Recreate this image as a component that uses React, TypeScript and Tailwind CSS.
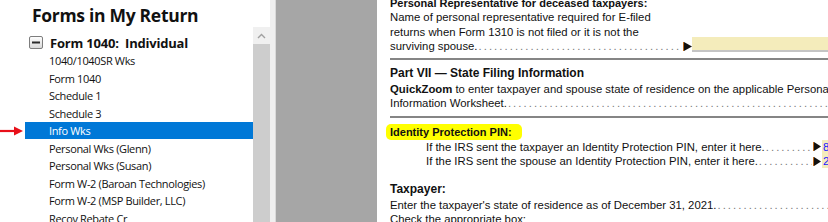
import React from "react";

const ITEMS = [
  "1040/1040SR Wks",
  "Form 1040",
  "Schedule 1",
  "Schedule 3",
  "Info Wks",
  "Personal Wks (Glenn)",
  "Personal Wks (Susan)",
  "Form W-2 (Baroan Technologies)",
  "Form W-2 (MSP Builder, LLC)",
  "Recov Rebate Cr",
];

const DOTS = ". . . . . . . . . . . . . . . . . . . . . . . . . . . . . . . . . . . . . . . . . . . . . . . . . . . . . . . . . . . . . . . . . . . . . . . . . . . . . . . . . . . . . . . . . . . . . . . . . . . . . . . . . . . . .";

function Leader() {
  return (
    <span className="flex-1 min-w-0 overflow-hidden whitespace-nowrap text-[#7a7a7a] tracking-[-0.55px] pl-[1px]">
      {DOTS}
    </span>
  );
}

function Pointer() {
  return (
    <svg width="8" height="9" viewBox="0 0 8 9" className="shrink-0">
      <rect x="0" y="0" width="1" height="9" fill="#c06a1a" />
      <polygon points="1,0 8,4.5 1,9" fill="#111" />
    </svg>
  );
}

function RedArrow() {
  return (
    <svg width="24" height="10" viewBox="0 0 24 10">
      <line x1="0" y1="5" x2="17" y2="5" stroke="#e8101a" strokeWidth="2.2" />
      <polygon points="14,0.5 23,5 14,9.5" fill="#e8101a" />
    </svg>
  );
}

function MinusBox() {
  return (
    <svg width="14" height="13" viewBox="0 0 14 13" className="shrink-0">
      <defs>
        <linearGradient id="mb" x1="0" y1="0" x2="0" y2="1">
          <stop offset="0" stopColor="#ffffff" />
          <stop offset="1" stopColor="#d8d8d8" />
        </linearGradient>
      </defs>
      <rect x="0.5" y="0.5" width="13" height="12" rx="1.5" fill="url(#mb)" stroke="#7d7d7d" />
      <rect x="3" y="5.5" width="8" height="2" fill="#2a2a2a" />
    </svg>
  );
}

function FormsTree() {
  return (
    <div className="w-[253px] shrink-0 bg-white font-['Open_Sans',sans-serif] text-[#111]">
      <div className="h-[33px] pl-[32px] pt-[2px] text-[17.5px] font-bold leading-[26px] tracking-[-0.3px]">
        Forms in My Return
      </div>
      <div className="h-[19px] flex items-center gap-[7px] pl-[29px] text-[13px] font-bold">
        <MinusBox />
        <span className="leading-[18px] tracking-[-0.2px]">Form 1040:&nbsp; Individual</span>
      </div>
      {ITEMS.map((name) => {
        const selected = name === "Info Wks";
        return (
          <div key={name} className="h-[17.5px] flex items-center">
            <div className="w-[25px] h-full flex items-center">{selected && <RedArrow />}</div>
            <div
              className={
                selected
                  ? "flex-1 h-[17px] pl-[24px] bg-[#0078d7] text-white text-[11px] tracking-[-0.35px] leading-[17px]"
                  : "flex-1 pl-[24px] text-[11px] tracking-[-0.35px] leading-[17px]"
              }
            >
              {name}
            </div>
          </div>
        );
      })}
    </div>
  );
}

function ScrollStrip() {
  return (
    <div className="flex shrink-0">
      <div className="w-[17px] flex flex-col">
        <div className="h-[27px] bg-white" />
        <div className="h-[17px] bg-[#f0f0f0] flex items-center justify-center">
          <svg width="9" height="6" viewBox="0 0 9 6">
            <polyline points="1,5 4.5,1.5 8,5" fill="none" stroke="#a0a0a0" strokeWidth="1.4" />
          </svg>
        </div>
        <div className="flex-1 bg-[#cdcdcd]" />
      </div>
      <div className="w-[5px] bg-[#efefef]" />
      <div className="w-[1px] bg-[#d9d9d9]" />
    </div>
  );
}

function DocPage() {
  return (
    <div className="flex-1 min-w-0 overflow-hidden bg-white pl-[13px] font-['Liberation_Sans',Arial,sans-serif] text-[11.33px] text-[#111]">
      <div className="w-[480px] -mt-[4.5px] leading-[14.5px]">
        <div className="font-bold text-[11px] whitespace-nowrap">Personal Representative for deceased taxpayers:</div>
        <div className="whitespace-nowrap">Name of personal representative required for E-filed</div>
        <div className="whitespace-nowrap">returns when Form 1310 is not filed or it is not the</div>
        <div className="flex items-start">
          <div className="w-[291px] flex">
            <span className="whitespace-nowrap">surviving spouse.</span>
            <Leader />
          </div>
          <span className="h-[14.5px] flex items-center ml-[2px]">
            <svg width="9" height="9" viewBox="0 0 9 9">
              <rect x="0" y="0" width="1" height="9" fill="#c06a1a" />
              <polygon points="1,0 9,4.5 1,9" fill="#111" />
            </svg>
          </span>
          <div className="flex-1 -mt-[2px] h-[15px] bg-[#f4ecbb] border-b-[2px] border-[#c4c4c4]" />
        </div>

        <div className="mt-[4.5px] h-[2px] bg-[#858585] w-[460px]" />

        <div className="mt-[4.5px] text-[12px] leading-[17px] font-bold">Part VII &mdash; State Filing Information</div>
        <div className="whitespace-nowrap">
          <span className="font-bold">QuickZoom</span> to enter taxpayer and spouse state of residence on the applicable Personal
        </div>
        <div className="flex">
          <span className="whitespace-nowrap">Information Worksheet.</span>
          <Leader />
        </div>

        <div className="mt-[5.5px] h-[2px] bg-[#858585] w-[460px]" />

        <div className="mt-[7px]">
          <span className="font-bold text-[11px] bg-[#ffff00] rounded-[5px] pl-[4px] pr-[10px] -ml-[4px] py-[2px]">
            Identity Protection PIN:
          </span>
        </div>
        <div className="flex items-center pl-[36px]">
          <div className="w-[386px] flex">
            <span className="whitespace-nowrap">If the IRS sent the taxpayer an Identity Protection PIN, enter it here.</span>
            <Leader />
          </div>
          <span className="ml-[1px]">
            <Pointer />
          </span>
          <span className="ml-[1px] w-[40px] h-[14px] bg-[#f4ecbb] text-[#1a1aff] pl-[1px] leading-[14px]">8</span>
        </div>
        <div className="flex items-center pl-[36px]">
          <div className="w-[386px] flex">
            <span className="whitespace-nowrap">If the IRS sent the spouse an Identity Protection PIN, enter it here.</span>
            <Leader />
          </div>
          <span className="ml-[1px]">
            <Pointer />
          </span>
          <span className="ml-[1px] w-[40px] h-[14px] bg-[#f4ecbb] text-[#1a1aff] pl-[1px] leading-[14px]">2</span>
        </div>

        <div className="mt-[12px] text-[12px] leading-[17px] font-bold">Taxpayer:</div>
        <div className="flex">
          <span className="whitespace-nowrap">Enter the taxpayer&apos;s state of residence as of December 31, 2021.</span>
          <Leader />
        </div>
        <div>Check the appropriate box:</div>
      </div>
    </div>
  );
}

export default function App() {
  return (
    <div className="w-[828px] h-[222px] flex overflow-hidden bg-white">
      <FormsTree />
      <ScrollStrip />
      <div className="w-[101px] shrink-0 bg-[#a6a6a6]" />
      <DocPage />
    </div>
  );
}
